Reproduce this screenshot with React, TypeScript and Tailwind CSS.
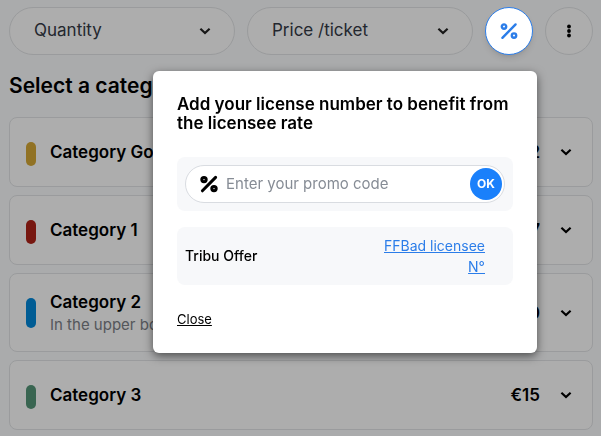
import { useState } from 'react'

const categories = [
  { name: 'Category Gold', price: '€32', color: 'mt-1 h-6 bg-[#d6a935]' },
  { name: 'Category 1', price: '€27', color: 'mt-1 h-6 bg-[#b02318]' },
  { name: 'Category 2', note: 'In the upper bowl', price: '€20', color: 'h-[30px] bg-[#0088db]' },
  { name: 'Category 3', price: '€15', color: 'mt-1 h-6 bg-[#559678]' },
]

function Chevron({ className = '' }: { className?: string }) {
  return (
    <svg viewBox="0 0 12 8" className={`h-2 w-3 shrink-0 ${className}`} fill="none" stroke="currentColor" strokeWidth="2.2" aria-hidden="true">
      <path d="M1.4 1.8 6 6l4.6-4.2" />
    </svg>
  )
}

function Percent({ className = '', strokeWidth = 2.4 }: { className?: string; strokeWidth?: number }) {
  return (
    <svg viewBox="0 0 18 18" className={`size-[18px] shrink-0 ${className}`} fill="none" stroke="currentColor" strokeWidth={strokeWidth} aria-hidden="true">
      <path d="M2.4 15.8 15.6 2.4" strokeLinecap="round" />
      <circle cx="4" cy="4.6" r="2.2" />
      <circle cx="14" cy="13.6" r="2.2" />
    </svg>
  )
}

function Filter({ label, options }: { label: string; options: string[] }) {
  return (
    <div className="relative flex min-w-0 flex-1 items-center">
      <select
        aria-label={label}
        className="h-12 w-full appearance-none rounded-full border border-[#e3e5e7] bg-white pr-10 pl-6 text-[17px] text-[#343a46]"
      >
        <option>{label}</option>
        {options.map((o) => (
          <option key={o}>{o}</option>
        ))}
      </select>
      <Chevron className="pointer-events-none absolute right-6 text-[#222]" />
    </div>
  )
}

function PromoPopover({ onClose }: { onClose: () => void }) {
  const [code, setCode] = useState('')

  return (
    <div
      role="dialog"
      aria-labelledby="promo-title"
      className="absolute top-full -right-1 mt-4 w-96 rounded-md bg-white p-6 text-black shadow-[0_3px_10px_rgba(0,0,0,0.55)]"
    >
      <h2 id="promo-title" className="text-[17px] leading-[19px] font-semibold">
        Add your license number to benefit from the licensee rate
      </h2>

      <form className="mt-6 rounded-lg bg-[#f7f8fa] p-2" onSubmit={(e) => e.preventDefault()}>
        <div className="flex h-[38px] items-center gap-2 rounded-full border border-[#d9dce1] bg-white pr-0.5 pl-3.5">
          <Percent strokeWidth={3} />
          <input
            aria-label="Promo code"
            placeholder="Enter your promo code"
            value={code}
            onChange={(e) => setCode(e.target.value)}
            className="min-w-0 flex-1 text-[15px] outline-none placeholder:text-[#868c95]"
          />
          <button className="size-8 rounded-full bg-[#1a80fb] text-xs font-bold text-white">OK</button>
        </div>
      </form>

      <div className="mt-4 flex items-center justify-between rounded-lg bg-[#f7f8fa] py-2 pr-7 pl-2">
        <span className="text-sm font-medium">Tribu Offer</span>
        <a href="#license" className="w-28 text-right text-sm leading-[21px] text-[#2b7de9] underline">
          FFBad licensee N°
        </a>
      </div>

      <button onClick={onClose} className="mt-6 block text-[13px] leading-5 underline">
        Close
      </button>
    </div>
  )
}

export default function App() {
  const [open, setOpen] = useState(true)

  return (
    <main className="min-h-screen bg-[#fbfcfe] pt-[7px] pr-2 pb-1.5 pl-[9px] font-['Inter',sans-serif] text-black">
      {open && <div className="fixed inset-0 z-10 bg-black/32" />}

      <div className="flex gap-3">
        <Filter label="Quantity" options={['1', '2', '3', '4']} />
        <Filter label="Price /ticket" options={['€15', '€20', '€27', '€32']} />
        <div className="relative z-20 size-12 shrink-0">
          <button
            aria-label="Promo code"
            onClick={() => setOpen(!open)}
            className="flex size-12 items-center justify-center rounded-full border border-[#2b7de9] bg-white text-[#2b7de9] shadow-md"
          >
            <Percent />
          </button>
          {open && <PromoPopover onClose={() => setOpen(false)} />}
        </div>
        <button
          aria-label="More"
          className="flex size-12 shrink-0 items-center justify-center rounded-full border border-[#e3e5e7] bg-white"
        >
          <svg viewBox="0 0 4 14" className="h-3.5 w-1" fill="currentColor" aria-hidden="true">
            <circle cx="2" cy="2.5" r="1.9" />
            <circle cx="2" cy="7" r="1.9" />
            <circle cx="2" cy="11.5" r="1.9" />
          </svg>
        </button>
      </div>

      <h1 className="mt-4 text-[21px] leading-[30px] font-semibold">Select a category</h1>

      <div className="mt-4 flex flex-col gap-2">
        {categories.map((c) => (
          <button
            key={c.name}
            className="flex min-h-[70px] w-full items-center rounded-lg border border-[#e3e5e7] bg-white px-4 py-4 text-left"
          >
            <span className={`w-2.5 shrink-0 rounded-full ${c.color}`} />
            <span className="ml-3.5 flex-1">
              <span className="block text-[17px] leading-6 font-semibold">{c.name}</span>
              {c.note && <span className="block text-[15px] leading-[21px] text-[#7c8087]">{c.note}</span>}
            </span>
            <span className="text-[17px] leading-6 font-semibold">{c.price}</span>
            <Chevron className="mr-1 ml-5" />
          </button>
        ))}
      </div>
    </main>
  )
}
